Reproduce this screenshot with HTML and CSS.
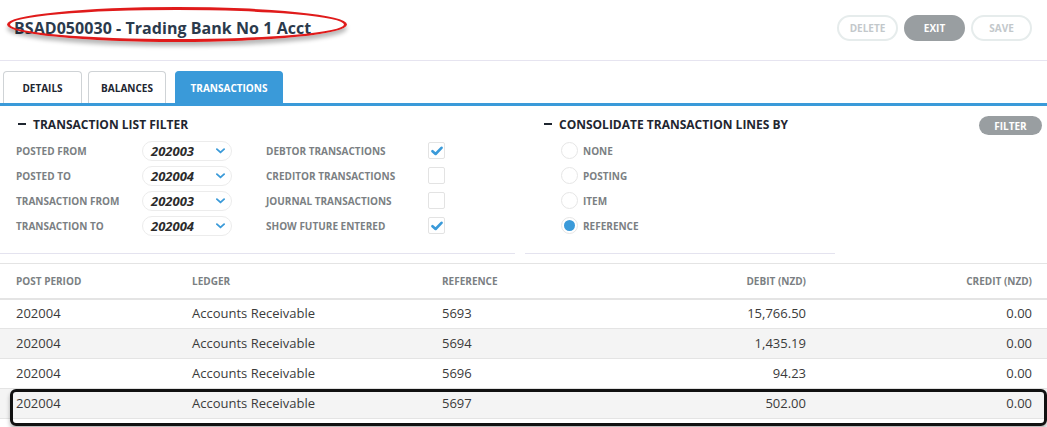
FILE: index.html
```html
<!DOCTYPE html>
<html>
<head>
<meta charset="utf-8">
<link rel="stylesheet" href="styles.css">
</head>
<body>
<header class="topbar">
  <div class="title-wrap">
    <h1 class="title">BSAD050030 - Trading Bank No 1 Acct</h1>
    <span class="ellipse"></span>
  </div>
  <div class="actions">
    <button class="btn btn-ghost">DELETE</button>
    <button class="btn btn-solid">EXIT</button>
    <button class="btn btn-ghost">SAVE</button>
  </div>
</header>

<nav class="tabs">
  <div class="tab">DETAILS</div>
  <div class="tab">BALANCES</div>
  <div class="tab active">TRANSACTIONS</div>
</nav>

<section class="filters">
  <div class="panel panel-left">
    <h2 class="panel-title"><span class="dash"></span>TRANSACTION LIST FILTER</h2>
    <div class="grid">
      <span class="lbl">POSTED FROM</span>
      <span class="select">202003<svg class="chev" viewBox="0 0 10 6" width="9" height="6"><path d="M1 1 L5 4.6 L9 1" fill="none" stroke="#3a9ad9" stroke-width="2" stroke-linecap="round" stroke-linejoin="round"/></svg></span>
      <span class="lbl lbl2">DEBTOR TRANSACTIONS</span>
      <span class="cb"><svg viewBox="0 0 12 10" width="12" height="10"><path d="M1.5 5.2 L4.6 8 L10.5 1.8" fill="none" stroke="#3a9ad9" stroke-width="2.6" stroke-linecap="round" stroke-linejoin="round"/></svg></span>

      <span class="lbl">POSTED TO</span>
      <span class="select">202004<svg class="chev" viewBox="0 0 10 6" width="9" height="6"><path d="M1 1 L5 4.6 L9 1" fill="none" stroke="#3a9ad9" stroke-width="2" stroke-linecap="round" stroke-linejoin="round"/></svg></span>
      <span class="lbl lbl2">CREDITOR TRANSACTIONS</span>
      <span class="cb"></span>

      <span class="lbl">TRANSACTION FROM</span>
      <span class="select">202003<svg class="chev" viewBox="0 0 10 6" width="9" height="6"><path d="M1 1 L5 4.6 L9 1" fill="none" stroke="#3a9ad9" stroke-width="2" stroke-linecap="round" stroke-linejoin="round"/></svg></span>
      <span class="lbl lbl2">JOURNAL TRANSACTIONS</span>
      <span class="cb"></span>

      <span class="lbl">TRANSACTION TO</span>
      <span class="select">202004<svg class="chev" viewBox="0 0 10 6" width="9" height="6"><path d="M1 1 L5 4.6 L9 1" fill="none" stroke="#3a9ad9" stroke-width="2" stroke-linecap="round" stroke-linejoin="round"/></svg></span>
      <span class="lbl lbl2">SHOW FUTURE ENTERED</span>
      <span class="cb"><svg viewBox="0 0 12 10" width="12" height="10"><path d="M1.5 5.2 L4.6 8 L10.5 1.8" fill="none" stroke="#3a9ad9" stroke-width="2.6" stroke-linecap="round" stroke-linejoin="round"/></svg></span>
    </div>
  </div>
  <div class="panel panel-right">
    <h2 class="panel-title"><span class="dash"></span>CONSOLIDATE TRANSACTION LINES BY</h2>
    <div class="radios">
      <div class="radio-row"><span class="radio"></span><span class="lbl">NONE</span></div>
      <div class="radio-row"><span class="radio"></span><span class="lbl">POSTING</span></div>
      <div class="radio-row"><span class="radio"></span><span class="lbl">ITEM</span></div>
      <div class="radio-row"><span class="radio on"></span><span class="lbl">REFERENCE</span></div>
    </div>
  </div>
  <div class="filter-side">
    <button class="btn-filter">FILTER</button>
  </div>
</section>

<table class="tx">
  <thead>
    <tr>
      <th class="c1">POST PERIOD</th>
      <th class="c2">LEDGER</th>
      <th class="c3">REFERENCE</th>
      <th class="c4 num">DEBIT (NZD)</th>
      <th class="c5 num">CREDIT (NZD)</th>
    </tr>
  </thead>
  <tbody>
    <tr><td>202004</td><td>Accounts Receivable</td><td>5693</td><td class="num">15,766.50</td><td class="num">0.00</td></tr>
    <tr><td>202004</td><td>Accounts Receivable</td><td>5694</td><td class="num">1,435.19</td><td class="num">0.00</td></tr>
    <tr><td>202004</td><td>Accounts Receivable</td><td>5696</td><td class="num">94.23</td><td class="num">0.00</td></tr>
    <tr class="marked"><td>202004</td><td>Accounts Receivable</td><td>5697</td><td class="num">502.00</td><td class="num">0.00</td></tr>
  </tbody>
</table>
</body>
</html>
```

FILE: styles.css
```css
* { box-sizing: border-box; }
html, body { margin: 0; padding: 0; background: #fff; }
body {
  font-family: "Open Sans", "Noto Sans", "DejaVu Sans", sans-serif;
  color: #333;
  width: 1047px;
  height: 427px;
  overflow: hidden;
}

/* header */
.topbar {
  height: 61px;
  display: flex;
  align-items: center;
  justify-content: space-between;
  padding: 0 15px 0 14px;
  border-bottom: 1px solid #e6e4f0;
}
.title-wrap { position: relative; margin-top: -5px; }
.title {
  margin: 0;
  font-size: 16px;
  font-weight: 700;
  color: #2b3a4c;
  letter-spacing: 0.05px;
}
.ellipse {
  position: absolute;
  left: -7px;
  top: -10px;
  width: 340px;
  height: 35px;
  border: 3px solid #e01b1b;
  border-radius: 50%;
  box-shadow: 0 4px 4px rgba(0,0,0,0.28);
  pointer-events: none;
}
.actions { display: flex; gap: 6px; margin-top: -4px; }
.btn {
  height: 26px;
  width: 61px;
  border-radius: 13px;
  font-family: inherit;
  font-size: 10px;
  font-weight: 700;
  padding: 0;
}
.btn-ghost { background: #fff; border: 2px solid #e6ecec; color: #c3c8cb; }
.btn-solid { background: #999ea1; border: 2px solid #999ea1; color: #fff; }

/* tabs */
.tabs {
  display: flex;
  gap: 6px;
  padding: 10px 0 0 3px;
  border-bottom: 3px solid #3a9ad9;
}
.tab {
  height: 32px;
  display: flex;
  align-items: center;
  justify-content: center;
  border: 1px solid #cfd3d6;
  border-bottom: none;
  border-radius: 4px 4px 0 0;
  font-size: 10px;
  font-weight: 700;
  color: #1d2530;
  width: 79px;
}
.tab:nth-child(2) { width: 78px; }
.tab.active {
  background: #3a9ad9;
  border-color: #3a9ad9;
  color: #fff;
  width: 108px;
  margin-left: 3px;
}

/* filters */
.filters {
  display: flex;
  height: 157px;
  align-items: flex-start;
}
.panel {
  height: 148px;
  border-bottom: 1px solid #e4e3ef;
}
.panel-left { width: 515px; padding-left: 16px; }
.panel-right { width: 310px; margin-left: 10px; padding-left: 17px; }
.panel-title {
  margin: 0;
  height: 32px;
  padding-top: 4px;
  display: flex;
  align-items: center;
  font-size: 12px;
  font-weight: 700;
  color: #1f2630;
}
.dash {
  display: inline-block;
  width: 8px;
  height: 2px;
  background: #1f2630;
  margin: 0 7px 0 2px;
}
.grid {
  display: grid;
  grid-template-columns: 126px 90px 196px 17px;
  grid-auto-rows: 25px;
  align-items: center;
}
.grid .lbl2 { padding-left: 34px; }
.lbl {
  font-size: 10px;
  font-weight: 700;
  color: #7b7f83;
  white-space: nowrap;
}
.select {
  height: 20px;
  border: 1px solid #ececec;
  border-radius: 10px;
  display: flex;
  align-items: center;
  justify-content: space-between;
  padding: 0 6px 0 8px;
  font-size: 13px;
  font-weight: 700;
  font-style: italic;
  color: #2b2b2b;
}
.chev { margin-top: 1px; }
.cb {
  width: 17px;
  height: 17px;
  border: 1px solid #e3e3e3;
  border-radius: 2px;
  display: flex;
  align-items: center;
  justify-content: center;
}
.radios { display: flex; flex-direction: column; padding-left: 19px; }
.radio-row {
  height: 25px;
  display: flex;
  align-items: center;
  gap: 5px;
}
.radio {
  width: 17px;
  height: 17px;
  border-radius: 50%;
  border: 1px solid #e6e6e6;
  background: #fff;
  position: relative;
}
.radio.on::after {
  content: "";
  position: absolute;
  left: 2px; top: 2px;
  width: 11px; height: 11px;
  border-radius: 50%;
  background: #3a9ad9;
}
.filter-side {
  flex: 1;
  display: flex;
  justify-content: flex-end;
  padding: 10px 5px 0 0;
}
.btn-filter {
  width: 63px;
  height: 19px;
  border-radius: 10px;
  border: none;
  background: #999ea1;
  color: #fff;
  font-family: inherit;
  font-size: 10px;
  font-weight: 700;
  padding: 0;
}

/* table */
.tx {
  width: 1047px;
  border-collapse: collapse;
  table-layout: fixed;
}
.tx th, .tx td {
  text-align: left;
  padding: 0;
  white-space: nowrap;
}
.tx thead tr { height: 35px; border-top: 1px solid #e4e4e4; border-bottom: 2px solid #e4e4e4; }
.tx th {
  font-size: 10px;
  font-weight: 700;
  color: #7b7f83;
}
.tx tbody tr { height: 30px; border-bottom: 1px solid #e4e4e4; }
.tx tbody td { padding-bottom: 2px; }
.tx tbody tr:nth-child(even) { background: #f4f4f4; }
.tx td { font-size: 13px; color: #3b3b3b; }
.c1 { width: 192px; }
.c2 { width: 250px; }
.c3 { width: 130px; }
.c4 { width: 234px; }
.c5 { width: 241px; }
.tx th:first-child, .tx td:first-child { padding-left: 16px; }
.tx .num { text-align: right; }
.tx th:last-child, .tx td:last-child { padding-right: 15px; }
.marked td:first-child { position: relative; }
.marked td:first-child::after {
  content: "";
  position: absolute;
  left: 10px;
  top: 0;
  width: 1031px;
  height: 31px;
  border: 3px solid #111;
  border-radius: 6px;
  box-shadow: 0 3px 4px rgba(0,0,0,0.3);
  pointer-events: none;
}
```
